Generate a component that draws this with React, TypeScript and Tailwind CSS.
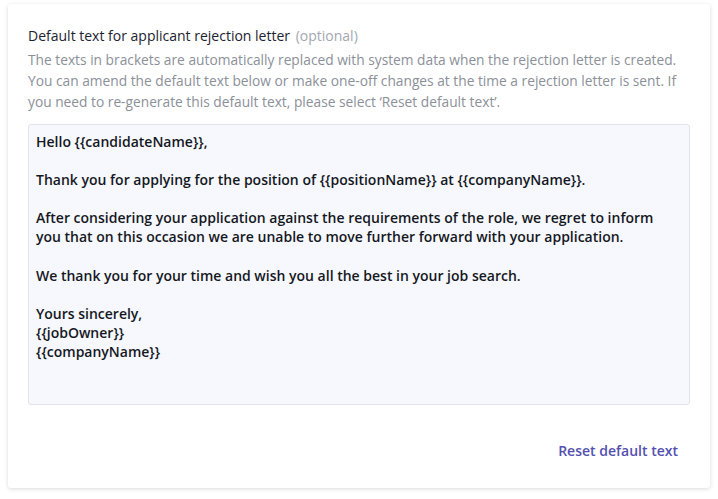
import React from "react";

export default function App() {
  const letter = `Hello {{candidateName}},

Thank you for applying for the position of {{positionName}} at {{companyName}}.

After considering your application against the requirements of the role, we regret to inform you that on this occasion we are unable to move further forward with your application.

We thank you for your time and wish you all the best in your job search.

Yours sincerely,
{{jobOwner}}
{{companyName}}`;
  return (
    <div className="w-[718px] h-[499px] bg-white pt-[4px] px-[8px]" style={{ fontFamily: '"Open Sans", "Noto Sans", sans-serif' }}>
      <div className="w-[702px] h-[484px] bg-white rounded-[3px] shadow-[0_1px_4px_rgba(0,0,0,0.15)] pt-[22px] px-[20px] flex flex-col">
        <div className="text-[14px] leading-[20px] text-[#1c2230]">
          Default text for applicant rejection letter{" "}
          <span className="text-[#a3a7b0] ml-[2px]">(optional)</span>
        </div>
        <p className="mt-[3px] text-[13.75px] leading-[21px] text-[#8b9099]">
          The texts in brackets are automatically replaced with system data when the rejection letter is created. You can amend the default text below or make one-off changes at the time a rejection letter is sent. If you need to re-generate this default text, please select ‘Reset default text’.
        </p>
        <div className="mt-[12px] h-[281px] bg-[#f7f8fd] border border-[#e2e4ec] rounded-[3px] pl-[7px] pr-[30px] pt-[7px] whitespace-pre-wrap text-[14px] leading-[19.1px] font-semibold text-[#15181f]">
          {letter}
        </div>
        <div className="flex justify-end mt-[36px] pr-[12px]">
          <button className="text-[14px] font-semibold text-[#5450b0] leading-[20px]">Reset default text</button>
        </div>
      </div>
    </div>
  );
}
